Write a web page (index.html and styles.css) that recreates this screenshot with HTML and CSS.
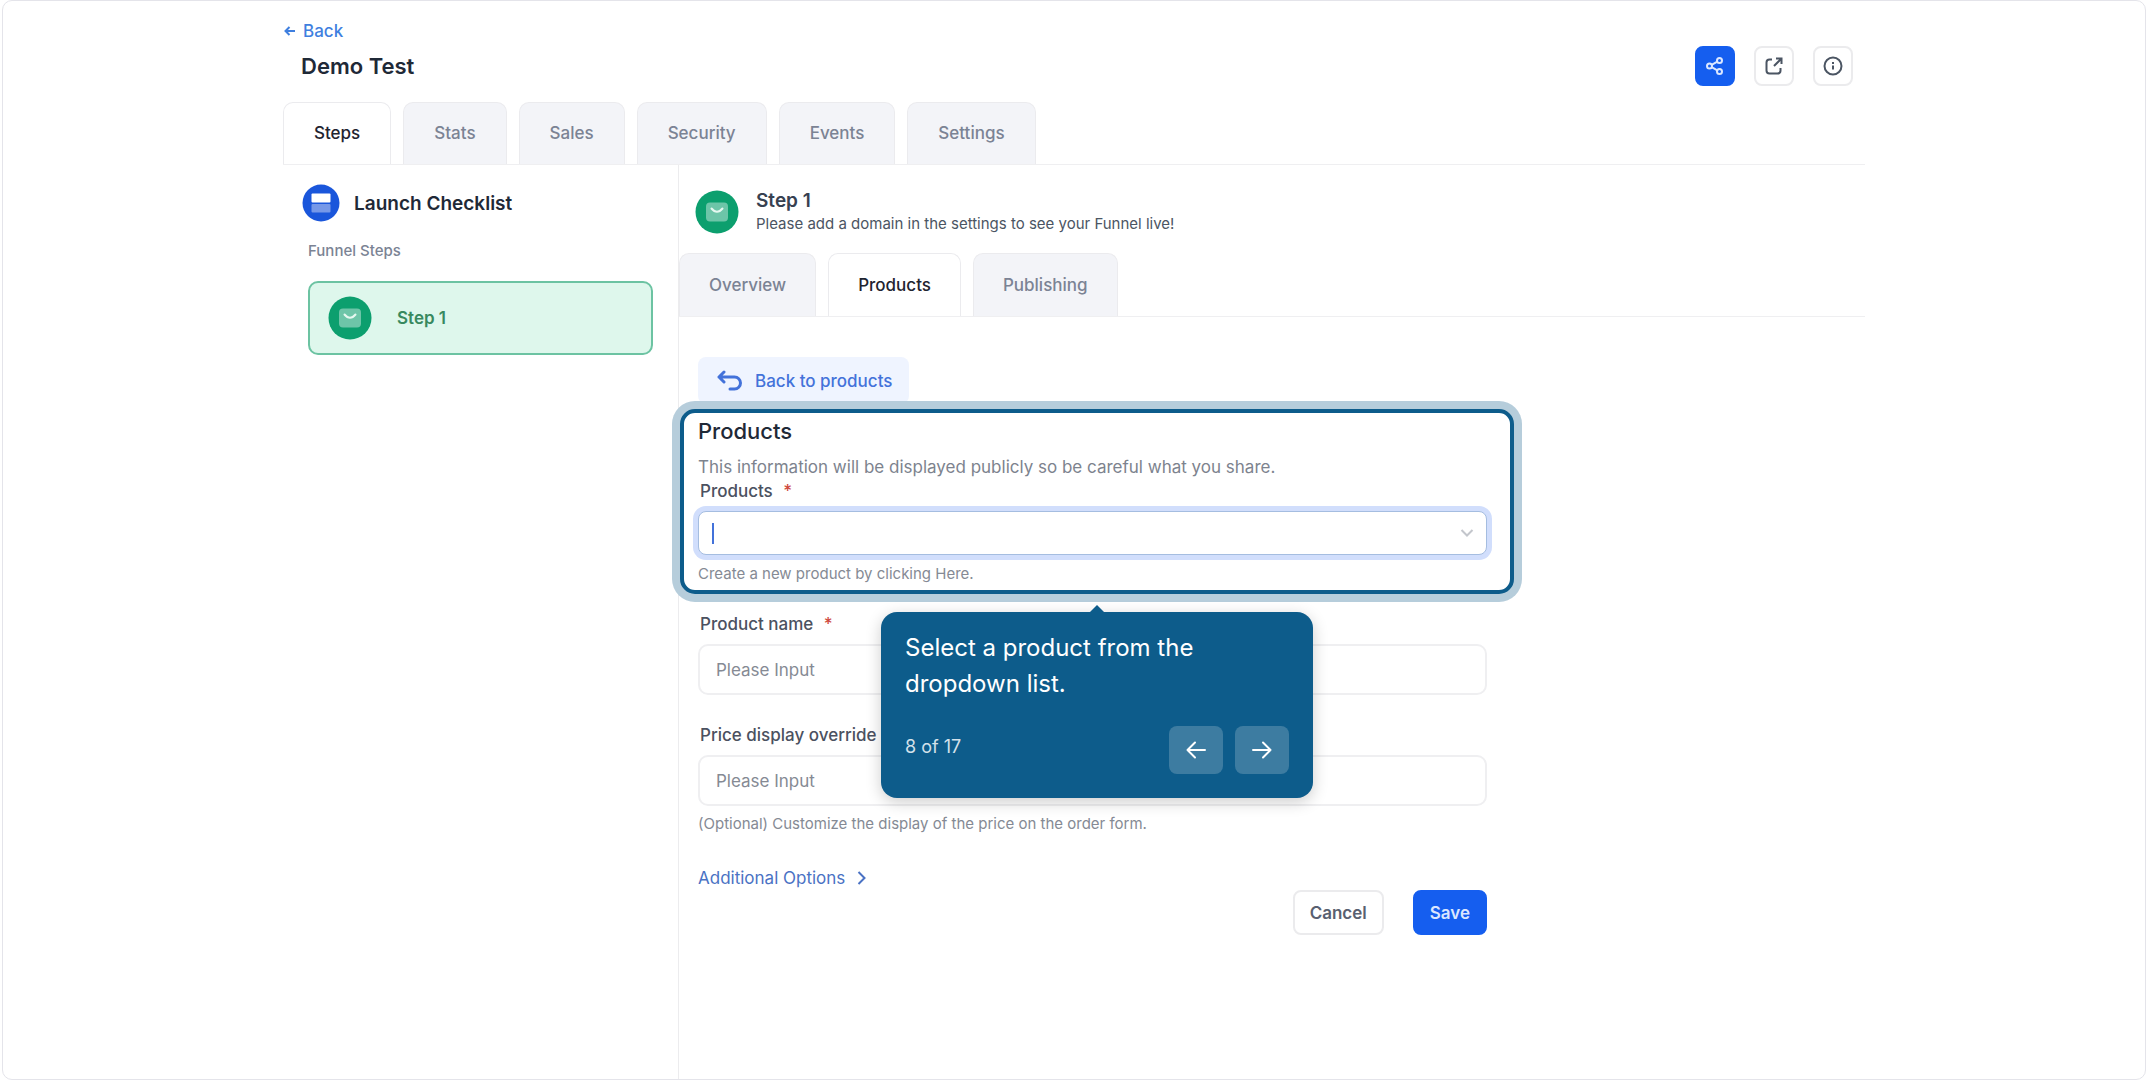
FILE: index.html
```html
<!DOCTYPE html>
<html lang="en-us">
  <head>
    <meta charset="utf-8" />
    <meta name="viewport" content="width=device-width, initial-scale=1" />
    <title>Demo Test - Funnel</title>
    <link rel="stylesheet" href="styles.css">
  </head>
  <body>
    <div class="frame">
      <div class="page">
        <a class="back" href="#">
          <svg width="12" height="12" viewBox="0 0 12 12"><path d="M11 6H1.500M5.500 2L1.500 6l4 4" /></svg>
          Back
        </a>
        <header class="header">
          <h1>Demo Test</h1>
          <div class="header-actions">
            <button type="button" class="icon-btn primary" aria-label="Share">
              <svg width="20" height="20" viewBox="0 0 20 20"><circle cx="4.500" cy="10" r="2.500" /><circle cx="14.500" cy="4.500" r="2.500" /><circle cx="14.500" cy="15.500" r="2.500" /><path d="M6.700 8.800l5.600-3.100M6.700 11.200l5.600 3.100" /></svg>
            </button>
            <button type="button" class="icon-btn" aria-label="Open in new tab">
              <svg width="20" height="20" viewBox="0 0 20 20"><path d="M8 3.500H5.500a3 3 0 0 0-3 3v8a3 3 0 0 0 3 3h8a3 3 0 0 0 3-3V12M12 2.500h5.500V8M17.500 2.500l-7.500 7.500" /></svg>
            </button>
            <button type="button" class="icon-btn" aria-label="Info">
              <svg width="20" height="20" viewBox="0 0 20 20"><circle cx="10" cy="10" r="8.500" /><path d="M10 9.500v4M10 6v2" /></svg>
            </button>
          </div>
        </header>

        <nav class="tabs">
          <a class="active" href="#">Steps</a>
          <a href="#">Stats</a>
          <a href="#">Sales</a>
          <a href="#">Security</a>
          <a href="#">Events</a>
          <a href="#">Settings</a>
        </nav>

        <div class="columns">
          <aside class="sidebar">
            <div class="checklist">
              <svg width="38" height="38" viewBox="0 0 38 38"><circle cx="19" cy="19" r="18.500" fill="#1a56db" /><rect x="9.500" y="9.500" width="19" height="9" rx="1" fill="#fff" /><rect x="9.500" y="20" width="19" height="8.500" rx="1" fill="#7698e8" /></svg>
              <h2>Launch Checklist</h2>
            </div>
            <p class="caption">Funnel Steps</p>
            <a class="step" href="#">
              <svg width="44" height="44" viewBox="0 0 44 44"><circle cx="22" cy="22" r="21.500" fill="#0c9f6e" /><rect x="11" y="12.500" width="22" height="19" rx="4" fill="#6dc5a8" /><path d="M16.500 18.500c3.500 4.300 7.500 4.300 11 0" fill="none" stroke="#e6f8f0" stroke-width="2" stroke-linecap="round" /></svg>
              <span>Step 1</span>
            </a>
          </aside>

          <main class="main">
            <div class="step-header">
              <svg width="44" height="44" viewBox="0 0 44 44"><circle cx="22" cy="22" r="21.500" fill="#0c9f6e" /><rect x="11" y="12.500" width="22" height="19" rx="4" fill="#6dc5a8" /><path d="M16.500 18.500c3.500 4.300 7.500 4.300 11 0" fill="none" stroke="#e6f8f0" stroke-width="2" stroke-linecap="round" /></svg>
              <div>
                <h2>Step 1</h2>
                <p>Please add a domain in the settings to see your Funnel live!</p>
              </div>
            </div>

            <nav class="tabs sub">
              <a href="#">Overview</a>
              <a class="active" href="#">Products</a>
              <a href="#">Publishing</a>
            </nav>

            <button type="button" class="back-products">
              <svg width="26" height="22" viewBox="0 0 26 22"><path d="M7 2L2 7l5 5M2 7h15.500a6 6 0 0 1 0 12H13" /></svg>
              Back to products
            </button>

            <form>
              <section class="spotlight">
                <h3>Products</h3>
                <p class="desc">This information will be displayed publicly so be careful what you share.</p>
                <label for="product">Products <span class="req">*</span></label>
                <div class="select">
                  <select id="product">
                    <option></option>
                  </select>
                  <span class="caret"></span>
                  <svg class="chevron" width="14" height="10" viewBox="0 0 14 10"><path d="M1.500 2L7 7.500 12.500 2" /></svg>
                </div>
                <p class="help">Create a new product by clicking Here.</p>

                <div class="tour" role="dialog" aria-label="Tour">
                  <p>Select a product from the dropdown list.</p>
                  <div class="tour-footer">
                    <span>8 of 17</span>
                    <button type="button" aria-label="Previous">
                      <svg width="22" height="22" viewBox="0 0 22 22"><path d="M20 11H2.500M10 3.500L2.500 11l7.500 7.500" /></svg>
                    </button>
                    <button type="button" aria-label="Next">
                      <svg width="22" height="22" viewBox="0 0 22 22"><path d="M2 11h17.500M12 3.500l7.500 7.500-7.500 7.500" /></svg>
                    </button>
                  </div>
                </div>
              </section>

              <div class="fields">
                <label for="name">Product name <span class="req">*</span></label>
                <input type="text" id="name" placeholder="Please Input" />

                <label for="price">Price display override</label>
                <input type="text" id="price" placeholder="Please Input" />
                <p class="help">(Optional) Customize the display of the price on the order form.</p>

                <a class="more" href="#">
                  Additional Options
                  <svg width="10" height="16" viewBox="0 0 10 16"><path d="M1.500 2l6 6-6 6" /></svg>
                </a>

                <div class="form-actions">
                  <button type="button">Cancel</button>
                  <button type="submit" class="save">Save</button>
                </div>
              </div>
            </form>
          </main>
        </div>
      </div>
    </div>
  </body>
</html>
```
FILE: styles.css
```css
* {
  box-sizing: border-box;
}
body {
  margin: 0;
  background: #fff;
  color: #1f2937;
  font-family: Inter, "Liberation Sans", sans-serif;
  font-size: 17px;
}
h1,
h2,
h3,
p {
  margin: 0;
}
a {
  text-decoration: none;
}
button,
input,
select {
  font: inherit;
}
button {
  cursor: pointer;
}
svg {
  flex: none;
}

.frame {
  display: flex;
  justify-content: center;
  min-height: 100vh;
  margin: 0 2px;
  border: 1px solid #e4e4ea;
  border-radius: 10px;
}
.page {
  display: flex;
  flex-direction: column;
  width: 100%;
  max-width: 1582px;
  padding-top: 18px;
}

/* header */
.back {
  display: flex;
  align-items: center;
  gap: 7px;
  padding-left: 1px;
  line-height: 24px;
  font-weight: 500;
  color: #3f7fdf;
}
.back svg {
  fill: none;
  stroke: currentColor;
  stroke-width: 2;
}
.header {
  display: flex;
  align-items: center;
  justify-content: space-between;
  margin-top: 3px;
  padding: 0 12px 0 18px;
}
h1 {
  font-size: 22px;
  font-weight: 600;
}
.header-actions {
  display: flex;
  gap: 19px;
}
.icon-btn {
  display: flex;
  align-items: center;
  justify-content: center;
  width: 40px;
  height: 40px;
  padding: 0;
  border: 2px solid #ebebed;
  border-radius: 8px;
  background: #fff;
  color: #4b5563;
}
.icon-btn svg {
  fill: none;
  stroke: currentColor;
  stroke-width: 2;
}
.icon-btn.primary {
  border-color: #155eef;
  background: #155eef;
  color: #dbe7ff;
}

/* tabs */
.tabs {
  display: flex;
  gap: 12px;
  margin-top: 16px;
  border-bottom: 1px solid #efeff1;
}
.tabs a {
  padding: 18px 30px 19px;
  border: 1px solid #ebebee;
  border-bottom: 0;
  border-radius: 10px 10px 0 0;
  background: #f3f4f8;
  line-height: 24px;
  font-weight: 500;
  color: #7b8394;
}
.tabs a.active {
  background: #fff;
  color: #1f2430;
}
.tabs.sub {
  margin-top: 18px;
}
.tabs.sub a {
  padding: 19px 29px;
}

/* columns */
.columns {
  display: grid;
  grid-template-columns: 396px 1fr;
  flex: 1;
}
.sidebar {
  padding: 19px 25px 0;
  border-right: 1px solid #ececee;
}
.checklist {
  display: flex;
  align-items: center;
  gap: 14px;
  margin-left: -6px;
}
.checklist h2 {
  font-size: 19px;
  font-weight: 600;
}
.caption {
  margin: 18px 0 19px;
  font-size: 15px;
  line-height: 22px;
  font-weight: 500;
  color: #7b8394;
}
.step {
  display: flex;
  align-items: center;
  gap: 25px;
  padding: 13px 18px;
  border: 2px solid #6cc3a2;
  border-radius: 10px;
  background: #def7ec;
  font-weight: 600;
  color: #38895f;
}

.step-header {
  display: flex;
  align-items: center;
  gap: 17px;
  padding: 24px 0 0 16px;
}
.step-header h2 {
  font-size: 19px;
  line-height: 24px;
  font-weight: 600;
  color: #374151;
}
.step-header p {
  font-size: 15px;
  line-height: 22px;
  color: #4b5563;
}

.back-products {
  display: flex;
  align-items: center;
  gap: 12px;
  height: 47px;
  margin: 40px 0 5px 19px;
  padding: 0 17px 0 19px;
  border: 0;
  border-radius: 8px;
  background: #eff4ff;
  font-weight: 500;
  color: #4372da;
}
.back-products svg {
  fill: none;
  stroke: currentColor;
  stroke-width: 3;
  stroke-linecap: round;
  stroke-linejoin: round;
}

/* form */
.spotlight {
  position: relative;
  max-width: 834px;
  margin-left: 1px;
  padding: 2px 23px 6px 14px;
  border: 4px solid #0d5c8b;
  border-radius: 15px;
  background: #fff;
  box-shadow: 0 0 0 8px #b6cddb;
}
h3 {
  font-size: 22px;
  line-height: 32px;
  font-weight: 500;
}
.desc {
  margin-top: 8px;
  line-height: 24px;
  color: #7d838e;
}
label {
  display: block;
  padding-left: 2px;
  font-size: 17px;
  line-height: 24px;
  font-weight: 500;
  color: #4b5160;
}
.req {
  margin-left: 6px;
  color: #cf4a40;
}
.select {
  position: relative;
  margin-top: 8px;
}
.select select {
  display: block;
  width: 100%;
  height: 44px;
  appearance: none;
  border: 1px solid #a5bde0;
  border-radius: 8px;
  outline: 0;
  background: #fff;
  box-shadow: 0 0 0 5px #d1defc;
}
.caret {
  position: absolute;
  top: 12px;
  left: 14px;
  width: 2px;
  height: 21px;
  background: #4372da;
}
.chevron {
  position: absolute;
  top: 17px;
  right: 13px;
  fill: none;
  stroke: #c3c6cc;
  stroke-width: 2;
}
.help {
  margin-top: 9px;
  font-size: 15px;
  line-height: 20px;
  color: #858a94;
}

.fields {
  max-width: 808px;
  margin-top: 18px;
  padding-left: 19px;
}
.fields input {
  display: block;
  width: 100%;
  height: 51px;
  margin: 8px 0 28px;
  padding: 0 16px;
  border: 2px solid #efeff1;
  border-radius: 10px;
  background: #fff;
}
.fields input::placeholder {
  color: #858a94;
}
.fields .help {
  margin-top: -20px;
}
.more {
  display: flex;
  align-items: center;
  gap: 12px;
  margin-top: 32px;
  line-height: 24px;
  color: #4a72c4;
}
.more svg {
  fill: none;
  stroke: currentColor;
  stroke-width: 2;
}
.form-actions {
  display: flex;
  justify-content: flex-end;
  gap: 29px;
}
.form-actions button {
  height: 45px;
  padding: 0 15px;
  border: 2px solid #ebebed;
  border-radius: 8px;
  background: #fff;
  font-weight: 600;
  color: #596070;
}
.form-actions .save {
  border-color: #155eef;
  background: #155eef;
  color: #dbe7ff;
}

/* tour popover */
.tour {
  position: absolute;
  z-index: 1;
  top: calc(100% + 22px);
  left: calc(50% - 216px);
  width: 432px;
  padding: 18px 24px 24px;
  border-radius: 16px;
  background: #0d5c8b;
  box-shadow: 0 4px 16px rgba(0, 0, 0, 0.2);
  font-size: 24px;
  line-height: 36px;
  color: #fff;
}
.tour::before {
  content: "";
  position: absolute;
  top: -7px;
  left: calc(50% - 7px);
  border: 7px solid transparent;
  border-top: 0;
  border-bottom-color: #0d5c8b;
}
.tour-footer {
  display: flex;
  gap: 12px;
  margin-top: 24px;
}
.tour-footer span {
  flex: 1;
  font-size: 18px;
  line-height: 42px;
  color: #d3e1ea;
}
.tour-footer button {
  display: flex;
  align-items: center;
  justify-content: center;
  width: 54px;
  height: 48px;
  padding: 0;
  border: 0;
  border-radius: 8px;
  background: #3d7ca1;
  color: #fff;
}
.tour-footer svg {
  fill: none;
  stroke: currentColor;
  stroke-width: 2;
  stroke-linecap: round;
  stroke-linejoin: round;
}
```
